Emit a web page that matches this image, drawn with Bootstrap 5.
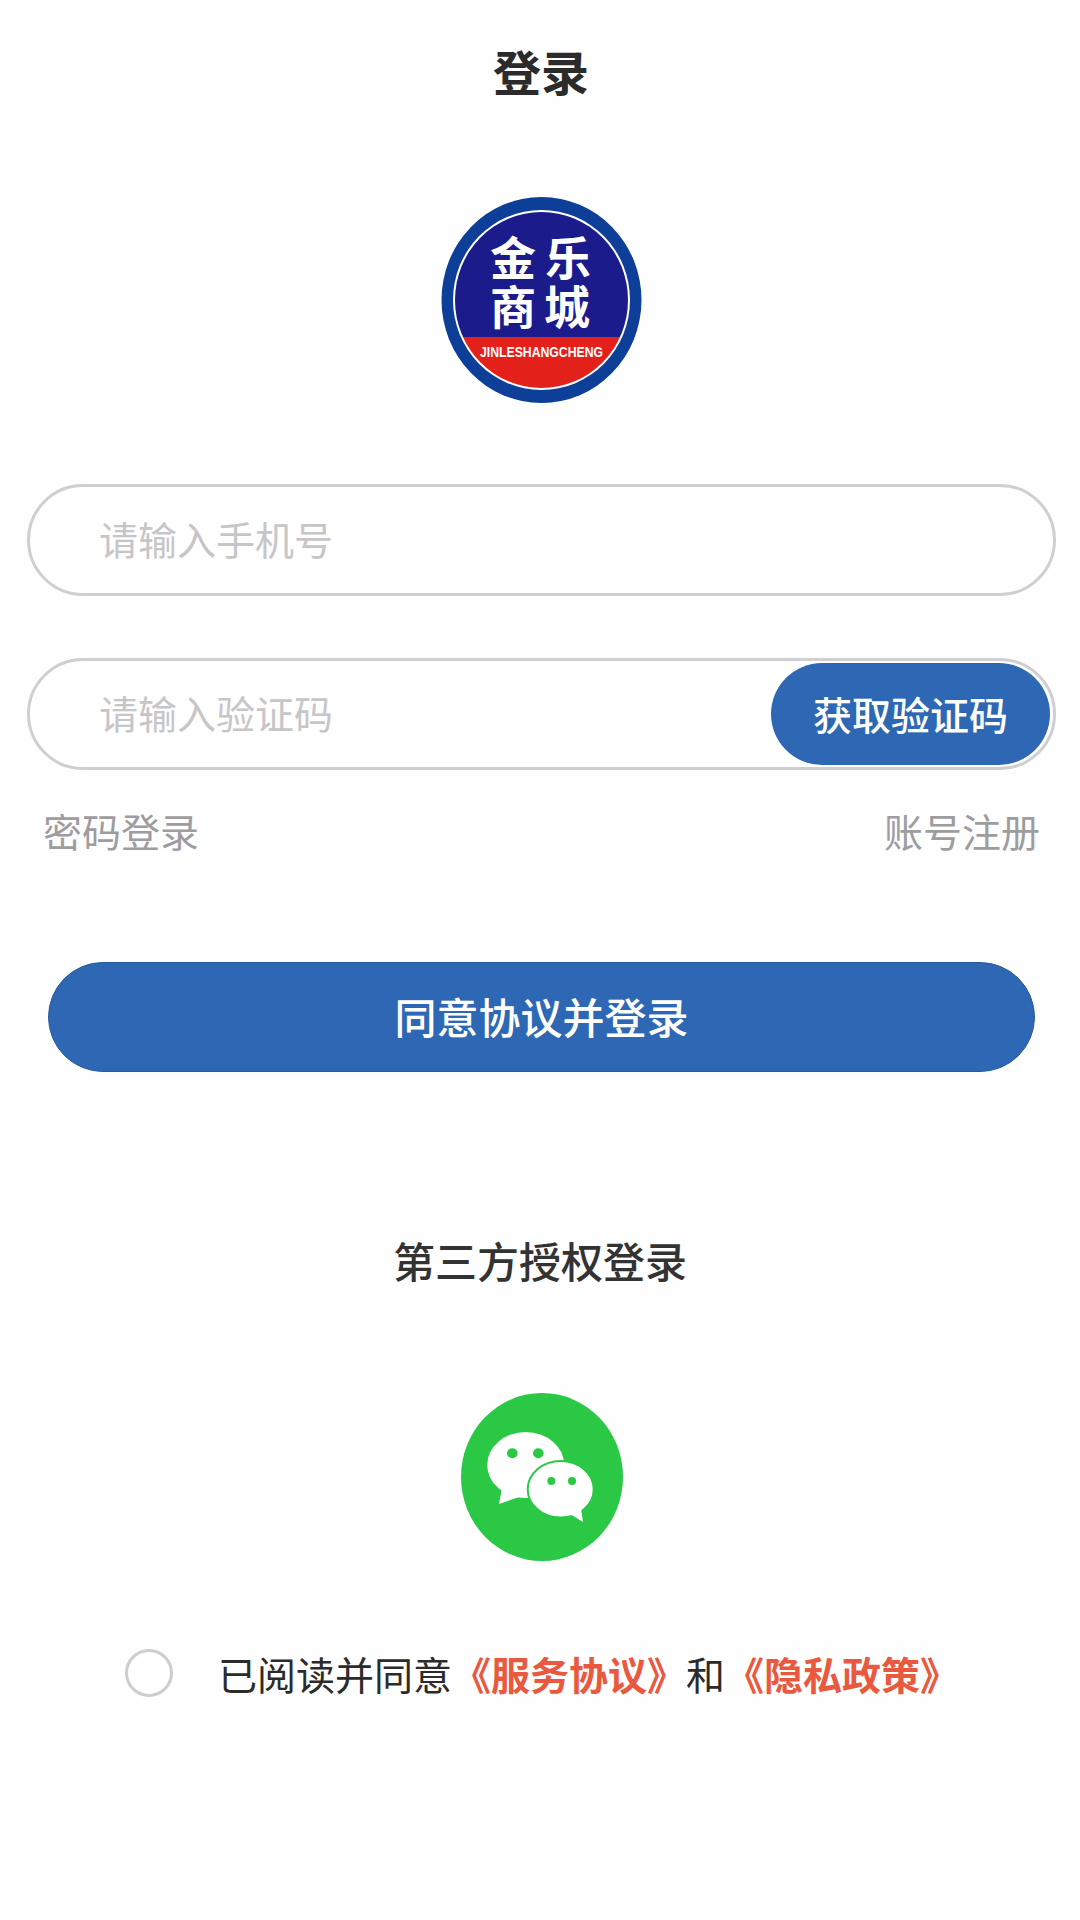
<!DOCTYPE html>
<html lang="zh-CN">
<head>
    <meta charset="UTF-8">
    <meta name="viewport" content="width=device-width, initial-scale=1.0">
    <title>登录</title>
    <link href="https://cdn.jsdelivr.net/npm/bootstrap@5.3.0/dist/css/bootstrap.min.css" rel="stylesheet">
    <style>
        body {
            background-color: #fefefe;
            color: #2b2b2b;
            font-family: "Noto Sans CJK SC", "Liberation Sans", sans-serif;
            width: 1080px;
            height: 1920px;
        }
        .page-title {
            font-size: 48px;
            font-weight: 700;
            line-height: 48px;
            padding: 46px 0 0 2px;
            margin: 0;
        }
        .logo-wrap { margin-top: 103px; padding-left: 3px; }
        .logo-wrap svg { display: block; }
        .pill-field {
            height: 112px;
            margin: 0 24px 0 27px;
            border: 3px solid #cfcfd1;
            border-radius: 56px;
            background: #fff;
            padding-right: 3px;
        }
        .pill-field input {
            border: 0;
            outline: 0;
            box-shadow: none;
            background: transparent;
            padding: 0 0 5px 69px;
            font-size: 39px;
            height: 100%;
        }
        .pill-field input::placeholder { color: #c6c6c8; opacity: 1; }
        .phone-field { margin-top: 81px; }
        .code-field { margin-top: 62px; }
        .code-btn {
            width: 279px;
            height: 102px;
            background-color: #2e68b4;
            border: 0;
            color: #fff;
            font-size: 39px;
            font-weight: 500;
            padding: 0 0 2px;
            white-space: nowrap;
        }
        .link-row {
            margin: 37px 40px 0 43px;
            font-size: 39px;
            line-height: 46px;
        }
        .link-row a { color: #9d9d9f; text-decoration: none; }
        .login-btn {
            display: block;
            width: 987px;
            height: 110px;
            margin: 109px 0 0 48px;
            background-color: #2e68b4;
            border: 1px solid #28599c;
            border-radius: 55px;
            color: #fff;
            font-size: 42px;
            font-weight: 500;
            padding: 0 0 3px;
        }
        .third-title {
            margin: 163px 0 0;
            color: #333;
            font-size: 42px;
            font-weight: 500;
            line-height: 50px;
        }
        .wechat-wrap { margin-top: 108px; padding-left: 4px; }
        .wechat-wrap svg { display: block; }
        .agree-row { margin: 88px 0 0 125px; height: 48px; }
        .agree-radio {
            width: 48px;
            height: 48px;
            margin: 0;
            flex: none;
            background-color: #fff;
            border: 3px solid #cdcdcf;
        }
        .agree-text {
            margin-left: 45px;
            font-size: 39px;
            line-height: 48px;
            white-space: nowrap;
        }
        .agree-text b {
            color: #e9593f;
            font-weight: 700;
        }
    </style>
</head>
<body>
    <h1 class="page-title text-center">登录</h1>

    <div class="logo-wrap d-flex justify-content-center">
        <svg width="201" height="206" viewBox="21 17 201 206">
            <defs>
                <clipPath id="logoClip"><ellipse cx="121.5" cy="120" rx="86.5" ry="88"/></clipPath>
            </defs>
            <ellipse cx="121.5" cy="120" rx="100" ry="103" fill="#0d3f98"/>
            <ellipse cx="121.5" cy="120" rx="88.5" ry="90" fill="#fff"/>
            <g clip-path="url(#logoClip)">
                <rect x="30" y="25" width="185" height="132" fill="#1b1b8b"/>
                <rect x="30" y="157" width="185" height="60" fill="#e3201a"/>
            </g>
            <g fill="#fff" font-size="46" font-weight="700" text-anchor="middle">
                <text x="93" y="95">金</text>
                <text x="148" y="95">乐</text>
                <text x="93" y="144">商</text>
                <text x="147" y="144">城</text>
            </g>
            <text x="60" y="177" fill="#fff" font-family="Liberation Sans" font-size="14" font-weight="700" textLength="123" lengthAdjust="spacingAndGlyphs">JINLESHANGCHENG</text>
        </svg>
    </div>

    <div class="pill-field phone-field d-flex align-items-center">
        <input class="form-control" type="text" placeholder="请输入手机号">
    </div>

    <div class="pill-field code-field d-flex align-items-center">
        <input class="form-control" type="text" placeholder="请输入验证码">
        <button class="btn code-btn rounded-pill flex-shrink-0" type="button">获取验证码</button>
    </div>

    <div class="link-row d-flex justify-content-between">
        <a href="#">密码登录</a>
        <a href="#">账号注册</a>
    </div>

    <button class="btn login-btn" type="button">同意协议并登录</button>

    <h2 class="third-title text-center">第三方授权登录</h2>

    <div class="wechat-wrap d-flex justify-content-center">
        <svg width="162" height="168" viewBox="22 23 162 168">
            <ellipse cx="103" cy="107" rx="81" ry="84" fill="#2ac845"/>
            <ellipse cx="86.7" cy="95" rx="38.5" ry="33" fill="#fff"/>
            <path d="M60 134 L63 118 L80 127 Z" fill="#fff"/>
            <ellipse cx="73.3" cy="83.3" rx="5.3" ry="5" fill="#2ac845"/>
            <ellipse cx="99.3" cy="83.3" rx="5.3" ry="5" fill="#2ac845"/>
            <ellipse cx="121.7" cy="119.3" rx="33" ry="28.3" fill="#fff" stroke="#2ac845" stroke-width="2"/>
            <path d="M144 152 L131 144 L142 138 Z" fill="#fff"/>
            <circle cx="112.3" cy="111" r="4" fill="#2ac845"/>
            <circle cx="133" cy="111" r="4" fill="#2ac845"/>
        </svg>
    </div>

    <div class="agree-row d-flex align-items-center">
        <input class="form-check-input agree-radio rounded-circle" type="checkbox" aria-label="同意">
        <div class="agree-text">已阅读并同意<b>《服务协议》</b>和<b>《隐私政策》</b></div>
    </div>

    <script src="https://cdn.jsdelivr.net/npm/bootstrap@5.3.0/dist/js/bootstrap.bundle.min.js"></script>
</body>
</html>
